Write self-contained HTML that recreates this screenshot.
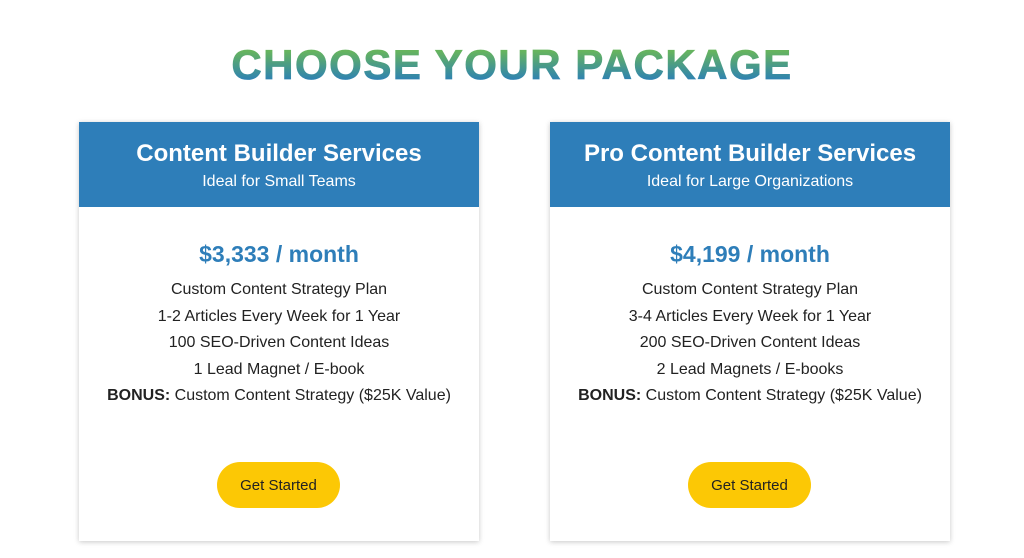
<!DOCTYPE html>
<html><head><style>
body{margin:0;background:#fff;width:1024px;height:558px;overflow:hidden;font-family:"Liberation Sans",Arial,sans-serif;position:relative}
h1{position:absolute;top:42px;left:0;width:1024px;margin:0;text-align:center;font-size:42px;line-height:46px;font-weight:bold;letter-spacing:1.5px;
background:linear-gradient(#66b45e 20%,#2c80b6 85%);-webkit-background-clip:text;background-clip:text;color:transparent;-webkit-text-stroke:0.8px transparent}
.card{position:absolute;top:122px;width:400px;height:419px;background:#fff;box-shadow:0 1px 5px rgba(0,0,0,.22)}
.hd{background:#2e7eb9;height:85px;color:#fff;text-align:center}
.hd .t{font-size:24px;font-weight:bold;padding-top:18px;line-height:28px}
.hd .s{font-size:16px;line-height:20px;margin-top:4px}
.price{text-align:center;color:#2e7eb9;font-size:23px;font-weight:bold;margin-top:32px;line-height:30px}
ul{list-style:none;margin:8px 0 0;padding:0;text-align:center;font-size:16px;color:#222;line-height:26.5px}
.btn{position:absolute;left:138px;top:340px;width:123px;height:46px;border-radius:23px;background:#fcc805;color:#222;font-size:15px;line-height:47px;text-align:center}
</style></head><body>
<h1>CHOOSE YOUR PACKAGE</h1>
<div class="card" style="left:79px">
<div class="hd"><div class="t">Content Builder Services</div><div class="s">Ideal for Small Teams</div></div>
<div class="price">$3,333 / month</div>
<ul><li>Custom Content Strategy Plan</li><li>1-2 Articles Every Week for 1 Year</li><li>100 SEO-Driven Content Ideas</li><li>1 Lead Magnet / E-book</li><li><b>BONUS:</b> Custom Content Strategy ($25K Value)</li></ul>
<div class="btn">Get Started</div>
</div>
<div class="card" style="left:550px">
<div class="hd"><div class="t">Pro Content Builder Services</div><div class="s">Ideal for Large Organizations</div></div>
<div class="price">$4,199 / month</div>
<ul><li>Custom Content Strategy Plan</li><li>3-4 Articles Every Week for 1 Year</li><li>200 SEO-Driven Content Ideas</li><li>2 Lead Magnets / E-books</li><li><b>BONUS:</b> Custom Content Strategy ($25K Value)</li></ul>
<div class="btn">Get Started</div>
</div>
</body></html>
